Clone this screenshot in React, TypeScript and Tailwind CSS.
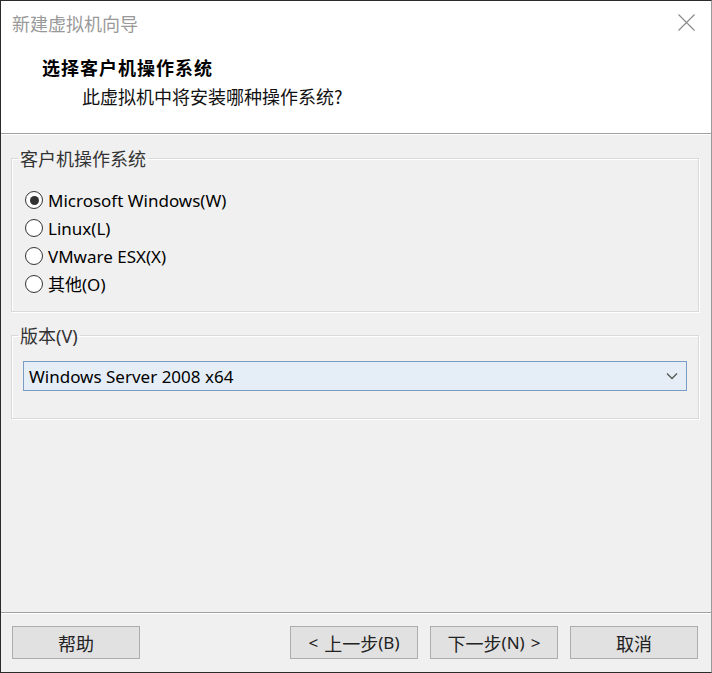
import React from "react";

const CJK = { fontFamily: '"Noto Sans CJK SC", sans-serif' };
const UI = { fontFamily: '"Noto Sans", "Noto Sans CJK SC", sans-serif' };

function Radio({ label, checked }: { label: React.ReactNode; checked?: boolean }) {
  return (
    <div className="flex h-[28px] items-center">
      <div className="ml-[13px] flex h-[18px] w-[18px] items-center justify-center rounded-full border border-[#333] bg-white">
        {checked && <div className="h-[9px] w-[9px] rounded-full bg-[#333]" />}
      </div>
      <span className="ml-[5px] text-[17px] leading-none text-[#000]" style={UI}>
        {label}
      </span>
    </div>
  );
}

function Btn({ children, className = "" }: { children: React.ReactNode; className?: string }) {
  return (
    <div
      className={`flex h-[33px] w-[128px] items-center justify-center border border-[#adadad] bg-[#e1e1e1] text-[17px] leading-none text-[#222] ${className}`}
      style={UI}
    >
      {children}
    </div>
  );
}

export default function App() {
  return (
    <div className="flex h-[673px] w-[712px] flex-col border-t border-b border-l border-r border-t-[#2b2b2b] border-l-[#2b2b2b] border-b-[#2b2b2b] border-r-[#9a9a9a] bg-[#f0f0f0]">
      {/* header */}
      <div className="flex h-[133px] flex-col border-b border-[#a0a0a0] bg-white">
        <div className="flex h-[43px] items-center justify-between">
          <span className="ml-[11px] text-[18px] leading-none text-[#999]" style={CJK}>
            新建虚拟机向导
          </span>
          <svg className="mr-[16px]" width="17" height="17" viewBox="0 0 17 17">
            <path d="M0.5 0.5 L16.5 16.5 M16.5 0.5 L0.5 16.5" stroke="#8a8a8a" strokeWidth="1.1" fill="none" />
          </svg>
        </div>
        <div className="ml-[41px] mt-[14px] text-[18px] font-bold leading-none tracking-[1px] text-black" style={CJK}>
          选择客户机操作系统
        </div>
        <div className="ml-[81px] mt-[11px] text-[18px] leading-none text-[#111]" style={CJK}>
          此虚拟机中将安装哪种操作系统?
        </div>
      </div>

      {/* body */}
      <div className="flex flex-1 flex-col border-t border-white">
        <fieldset className="ml-[10px] mr-[12px] mt-[13px] border border-[#d9d9d9] p-0 pb-[13px] pt-[18px] shadow-[inset_1px_1px_0_#fff,1px_1px_0_#fff]">
          <legend className="ml-[6px] px-[2px] text-[18px] leading-[20px] text-[#333]" style={CJK}>
            客户机操作系统
          </legend>
          <Radio label="Microsoft Windows(W)" checked />
          <Radio label="Linux(L)" />
          <Radio label="VMware ESX(X)" />
          <Radio label={<><span style={CJK}>其他</span>(O)</>} />
        </fieldset>

        <fieldset className="ml-[10px] mr-[12px] mt-[13px] border border-[#d9d9d9] p-0 pb-[27px] pt-[15px] shadow-[inset_1px_1px_0_#fff,1px_1px_0_#fff]">
          <legend className="ml-[6px] px-[2px] text-[18px] leading-[20px] text-[#333]" style={CJK}>
            版本<span style={UI}>(V)</span>
          </legend>
          <div className="ml-[11px] mr-[11px] flex h-[30px] items-center justify-between border border-[#7a9cc0] bg-[#e5eef7]">
            <span className="ml-[5px] text-[17px] leading-none text-black" style={UI}>
              Windows Server 2008 x64
            </span>
            <svg className="mr-[8px]" width="12" height="8" viewBox="0 0 12 8">
              <path d="M1 1.5 L6 6.5 L11 1.5" stroke="#555" strokeWidth="1.3" fill="none" />
            </svg>
          </div>
        </fieldset>

        <div className="flex-1" />

        <div className="border-t border-[#a0a0a0] shadow-[inset_0_1px_0_#fff]">
          <div className="flex items-center pb-[13px] pt-[13px]">
            <Btn className="ml-[11px]">
              <span className="text-[18px]" style={CJK}>帮助</span>
            </Btn>
            <div className="flex-1" />
            <Btn>
              &lt; <span className="ml-[6px] text-[18px]" style={CJK}>上一步</span>(B)
            </Btn>
            <Btn className="ml-[12px]">
              <span className="text-[18px]" style={CJK}>下一步</span>(N) <span className="ml-[6px]">&gt;</span>
            </Btn>
            <Btn className="ml-[12px] mr-[13px]">
              <span className="text-[18px]" style={CJK}>取消</span>
            </Btn>
          </div>
        </div>
      </div>
    </div>
  );
}
